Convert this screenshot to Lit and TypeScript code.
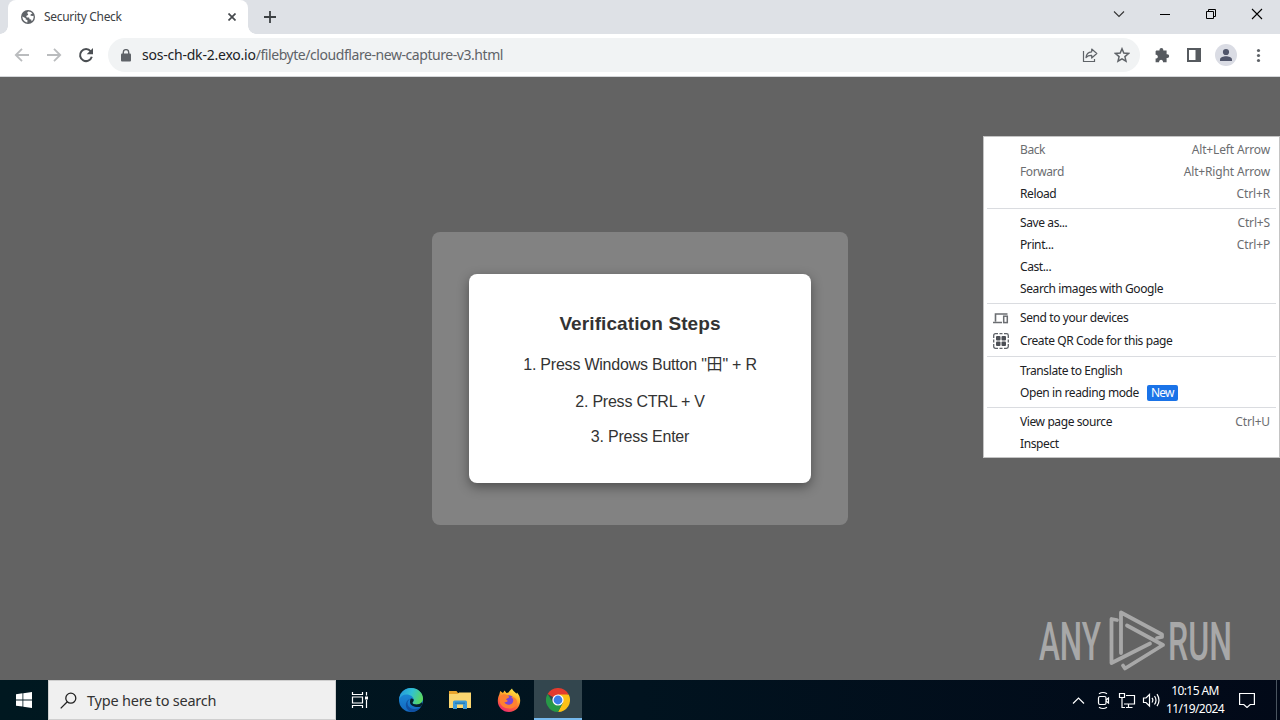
import { LitElement, html, css, svg, nothing } from "lit";
import { customElement, property } from "lit/decorators.js";

interface MenuItem {
  label: string;
  shortcut?: string;
  disabled?: boolean;
  icon?: "devices" | "qr";
  badge?: string;
}

const MENU: MenuItem[][] = [
  [
    { label: "Back", shortcut: "Alt+Left Arrow", disabled: true },
    { label: "Forward", shortcut: "Alt+Right Arrow", disabled: true },
    { label: "Reload", shortcut: "Ctrl+R" },
  ],
  [
    { label: "Save as...", shortcut: "Ctrl+S" },
    { label: "Print...", shortcut: "Ctrl+P" },
    { label: "Cast..." },
    { label: "Search images with Google" },
  ],
  [
    { label: "Send to your devices", icon: "devices" },
    { label: "Create QR Code for this page", icon: "qr" },
  ],
  [{ label: "Translate to English" }, { label: "Open in reading mode", badge: "New" }],
  [{ label: "View page source", shortcut: "Ctrl+U" }, { label: "Inspect" }],
];

const menuIcons = {
  devices: svg`
    <path d="M2.500 11.500V4H14.500M0 12.500h9" fill="none" stroke="#6b6e72" stroke-width="1.600"/>
    <rect x="10.700" y="6.200" width="3.600" height="6.400" fill="none" stroke="#6b6e72" stroke-width="1.500"/>`,
  qr: svg`
    <path d="M.7 5V2.500Q.7.7 2.500.7H5M11 .7h2.500q1.800 0 1.800 1.800V5M15.300 11v2.500q0 1.800-1.800 1.800H11M5 15.300H2.500Q.7 15.300.7 13.500V11M6.500.7h3M6.500 15.300h3M.7 6.500v3M15.300 6.500v3" fill="none" stroke="#5f6368" stroke-width="1.300"/>
    <rect x="3" y="3" width="4.500" height="4.500" rx="1" fill="#4c4f55"/>
    <rect x="8.500" y="3" width="4.500" height="4.500" rx="1" fill="#4c4f55"/>
    <rect x="3" y="8.500" width="4.500" height="4.500" rx="1" fill="#4c4f55"/>
    <rect x="8.500" y="8.500" width="4.500" height="4.500" rx="1" fill="#4c4f55"/>`,
};

@customElement("tab-strip")
class TabStrip extends LitElement {
  @property() title = "";

  render() {
    return html`
      <div class="tab">
        <svg class="globe" width="14" height="14" viewBox="0 0 14 14">
          <circle cx="7" cy="7" r="7" fill="#5f6368" />
          <path d="M1.4 6.5 4.7 8.2v1.3l1.7.4v2.5C3.6 12.200 1.400 9.700 1.400 6.500zM7.200 1.500c1.800 0 3.300.8 4.300 2.100l-1.700.6-.4 1.400 1.700.4 1.400-.3c.5 2.200-.3 4.200-1.900 5.500l-.4-1.600-1.600-.4-.5-1.600H5.700L5.200 5.900l1.700-.8.3-1.200-1.200-.8z" fill="#fff" />
        </svg>
        <span class="title">${this.title}</span>
        <svg class="close" width="8" height="8" viewBox="0 0 8 8">
          <path d="M.5.5l7 7m0-7l-7 7" stroke="#45494d" stroke-width="1.7" />
        </svg>
      </div>
      <svg class="plus" width="12" height="12" viewBox="0 0 12 12">
        <path d="M6 0v12M0 6h12" stroke="#3c4043" stroke-width="1.8" />
      </svg>
      <div class="controls">
        <svg width="46" height="28" viewBox="0 0 46 28">
          <path d="M18 11.500l5 5 5-5" fill="none" stroke="#333" stroke-width="1.100" />
        </svg>
        <svg width="46" height="28" viewBox="0 0 46 28">
          <path d="M18 14.500h10" stroke="#000" />
        </svg>
        <svg width="46" height="28" viewBox="0 0 46 28">
          <path d="M18.500 11.500h7v7h-7zM20.500 11.500v-2h7v7h-2" fill="none" stroke="#000" />
        </svg>
        <svg width="46" height="28" viewBox="0 0 46 28">
          <path d="M18 9l10 10m0-10l-10 10" stroke="#000" stroke-width="1.100" />
        </svg>
      </div>
    `;
  }

  static styles = css`
    :host {
      display: flex;
      height: 34px;
      padding-left: 8px;
      box-sizing: border-box;
      background: #dee1e6;
    }

    .tab {
      position: relative;
      display: flex;
      align-items: center;
      width: 240px;
      height: 34px;
      padding: 0 12px 0 13px;
      box-sizing: border-box;
      border-radius: 8px 8px 0 0;
      background: #fff;
    }

    .tab::before,
    .tab::after {
      content: "";
      position: absolute;
      bottom: 0;
      width: 8px;
      height: 8px;
    }

    .tab::before {
      left: -8px;
      background: radial-gradient(circle at 0 0, transparent 7.500px, #fff 8px);
    }

    .tab::after {
      right: -8px;
      background: radial-gradient(circle at 100% 0, transparent 7.500px, #fff 8px);
    }

    .title {
      flex: 1;
      margin-left: 9px;
      padding-bottom: 1px;
      font-size: 12px;
      letter-spacing: -0.32px;
      color: #3c4043;
    }

    .plus {
      margin: 11px 0 0 16px;
    }

    .controls {
      display: flex;
      margin-left: auto;
    }
  `;
}

@customElement("browser-toolbar")
class BrowserToolbar extends LitElement {
  @property() host = "";
  @property() path = "";

  render() {
    return html`
      <svg class="nav" width="100" height="42" viewBox="0 0 100 42" fill="none" stroke-width="1.800">
        <path d="M29 21H16.500M22 14.800L15.800 21l6.200 6.200M47 21h12.500M54 14.800l6.200 6.200-6.200 6.200" stroke="#babcbe" />
        <path d="M90.700 17.300A6 6 0 1 0 91.800 22.800" stroke="#4b4f53" stroke-width="2" />
        <path d="M93 14v6.300h-6.300z" fill="#4b4f53" />
      </svg>
      <div class="omnibox">
        <svg width="10" height="13" viewBox="0 0 10 13">
          <rect y="4.500" width="10" height="8" rx="1" fill="#5f6368" />
          <path d="M2.300 5V3.300a2.700 2.700 0 0 1 5.400 0V5" fill="none" stroke="#5f6368" stroke-width="1.400" />
        </svg>
        <span class="url"><span class="host">${this.host}</span>${this.path}</span>
        <svg class="share" width="16" height="16" viewBox="0 0 16 16" fill="none" stroke="#5f6368" stroke-width="1.200">
          <path d="M1.500 4v10.500h11V12" />
          <path d="M4 10.500C4.300 6.800 6.500 5 9.700 4.800V2L14.800 6.500 9.700 11V8.300C7.200 8.200 5.300 8.900 4 10.500z" stroke-linejoin="round" />
        </svg>
        <svg class="star" width="16" height="16" viewBox="0 0 16 16">
          <path d="M8 1.800l1.800 4.300 4.700.4-3.600 3.100 1.100 4.600L8 11.800l-4 2.400 1.100-4.600-3.600-3.100 4.700-.4z" fill="none" stroke="#5f6368" stroke-width="1.500" />
        </svg>
      </div>
      <svg class="actions" width="136" height="42" viewBox="0 0 136 42">
        <path d="M12.300 16.500h3.200v-.7a1.900 1.900 0 0 1 3.800 0v.7h3.300v3.700h.7a1.900 1.900 0 0 1 0 3.800h-.7v4.200h-3.600v-.8a2 2 0 0 0-3.900 0v.8h-3.500v-3.600h.7a2 2 0 0 0 0-3.900h-.7v-3.500z" fill="#565a5f" />
        <path d="M43 14h14v14H43zM45 16v10h6.500V16z" fill="#565a5f" fill-rule="evenodd" />
        <circle cx="82" cy="21" r="11" fill="#dadce4" />
        <circle cx="82" cy="18" r="3.100" fill="#51566b" />
        <path d="M76 27v-1.500c0-2.200 3.500-3.300 6-3.300s6 1.100 6 3.300V27z" fill="#51566b" />
        <g fill="#5f6368">
          <circle cx="114.500" cy="16.500" r="1.600" />
          <circle cx="114.500" cy="21.500" r="1.600" />
          <circle cx="114.500" cy="26.500" r="1.600" />
        </g>
      </svg>
    `;
  }

  static styles = css`
    :host {
      display: flex;
      align-items: center;
      height: 43px;
      box-sizing: border-box;
      border-bottom: 1px solid #d5d7da;
      background: #fff;
    }

    .nav {
      flex: none;
    }

    .omnibox {
      display: flex;
      align-items: center;
      flex: 1;
      height: 34px;
      margin-left: 8px;
      padding: 0 10px 0 13px;
      box-sizing: border-box;
      border-radius: 17px;
      background: #f1f3f4;
    }

    .url {
      flex: 1;
      margin-left: 11px;
      padding-bottom: 1px;
      font-size: 14px;
      letter-spacing: -0.44px;
      color: #5f6368;
    }

    .host {
      letter-spacing: -0.22px;
      color: #202124;
    }

    .share {
      margin-right: 16px;
    }

    .actions {
      flex: none;
      margin-left: 4px;
    }
  `;
}

@customElement("context-menu")
class ContextMenu extends LitElement {
  @property({ attribute: false }) groups: MenuItem[][] = [];

  renderItem(item: MenuItem) {
    return html`
      <div class="item ${item.disabled ? "disabled" : ""} ${item.icon === "qr" ? "tall" : ""}">
        <span class="icon">
          ${item.icon
            ? html`<svg width="16" height="16" viewBox="0 0 16 16">${menuIcons[item.icon]}</svg>`
            : nothing}
        </span>
        <span class="label">${item.label}</span>
        ${item.badge ? html`<span class="badge">${item.badge}</span>` : nothing}
        ${item.shortcut ? html`<span class="shortcut">${item.shortcut}</span>` : nothing}
      </div>
    `;
  }

  render() {
    return this.groups.map(
      (group) => html`<div class="group">${group.map((item) => this.renderItem(item))}</div>`
    );
  }

  static styles = css`
    :host {
      display: block;
      width: 297px;
      padding: 2px 3px;
      box-sizing: border-box;
      border: 1px solid #c4c4c4;
      background: #fff;
      font-size: 12px;
      color: #202124;
    }

    .group + .group {
      margin-top: 3px;
      padding-top: 3px;
      border-top: 1px solid #dadce0;
    }

    .item {
      display: flex;
      align-items: center;
      height: 22px;
      padding: 0 6px;
      box-sizing: border-box;
      white-space: nowrap;
    }

    .tall {
      height: 24px;
    }

    .icon {
      display: flex;
      width: 27px;
    }

    .label {
      padding-bottom: 2px;
      letter-spacing: -0.4px;
    }

    .badge {
      margin-left: 8px;
      padding: 0 4px;
      border-radius: 2px;
      background: #1a73e8;
      color: #fff;
      letter-spacing: -0.8px;
      line-height: 16px;
    }

    .shortcut {
      margin-left: auto;
      padding-bottom: 2px;
      letter-spacing: -0.15px;
      color: #6b6d70;
    }

    .disabled {
      color: #6b6d70;
    }
  `;
}

@customElement("verification-dialog")
class VerificationDialog extends LitElement {
  render() {
    return html`
      <div class="card">
        <h3>Verification Steps</h3>
        <p>1. Press Windows Button "<span class="key">田</span>" + R</p>
        <p>2. Press CTRL + V</p>
        <p>3. Press Enter</p>
      </div>
    `;
  }

  static styles = css`
    :host {
      display: flex;
      align-items: center;
      justify-content: center;
      width: 416px;
      height: 293px;
      border-radius: 8px;
      background: #828282;
      font-family: "Liberation Sans", Arial, sans-serif;
    }

    .card {
      width: 342px;
      height: 209px;
      padding-top: 39px;
      box-sizing: border-box;
      border-radius: 8px;
      background: #fff;
      box-shadow: 0 4px 12px rgba(0, 0, 0, 0.4);
      color: #333;
      text-align: center;
    }

    h3 {
      margin: 0 0 20px;
      font-size: 19px;
      letter-spacing: 0.1px;
      line-height: 22px;
    }

    p {
      margin: 0 0 16px;
      font-size: 16px;
      letter-spacing: -0.22px;
      line-height: 19px;
    }

    p:nth-of-type(1) {
      margin-bottom: 18px;
    }

    .key {
      font-family: "Noto Sans CJK SC", sans-serif;
      font-size: 16px;
      line-height: 1;
    }
  `;
}

@customElement("task-bar")
class TaskBar extends LitElement {
  render() {
    return html`
      <div class="start">
        <svg width="16" height="16" viewBox="0 0 16 16" fill="#fff">
          <path d="M0 2.200L6.500 1.300v6.200H0zM7.300 1.200L16 0v7.500H7.300zM0 8.400h6.500v6.200L0 13.700zM7.300 8.400H16V16l-8.700-1.200z" />
        </svg>
      </div>
      <div class="search">
        <svg width="17" height="17" viewBox="0 0 17 17" fill="none" stroke="#222" stroke-width="1.300">
          <circle cx="10.800" cy="6.200" r="5" />
          <path d="M7.300 9.800L.7 16.400" />
        </svg>
        <span>Type here to search</span>
      </div>
      <div class="view">
        <svg width="18" height="16" viewBox="0 0 18 16" fill="none" stroke="#fff" stroke-width="1.200">
          <path d="M1.500 0v2.500h10V0M1.500 16v-2.500h10V16M1.500 5h10v6h-10zM15.500 0v3.500M15.500 8v8" />
          <path d="M14 4.500h3v3h-3z" fill="#fff" stroke="none" />
        </svg>
      </div>
      <div class="apps">
        <div class="app">
          <svg width="24" height="24" viewBox="0 0 24 24">
            <defs>
              <linearGradient id="wave" x1="0" y1=".2" x2="1" y2=".5">
                <stop offset="0" stop-color="#2396dc" />
                <stop offset=".5" stop-color="#31c1d4" />
                <stop offset="1" stop-color="#5bd85c" />
              </linearGradient>
              <linearGradient id="deep" x1="0" y1="0" x2="0" y2="1">
                <stop offset="0" stop-color="#1c91dc" />
                <stop offset="1" stop-color="#1368c0" />
              </linearGradient>
            </defs>
            <circle cx="12" cy="12" r="12" fill="url(#deep)" />
            <path d="M8.500 15c0 4 3.500 6 7.500 6 2.500 0 4.500-.8 6-2-2.200 3.200-5.600 5-10 5-3.500-1.500-5.800-5-5-8.500.5-2.500 2.500-4.500 5-5-2 1-3.500 2.500-3.500 4.500z" fill="#1050a2" />
            <path d="M.2 11C.9 4.500 6 0 12 0c7 0 12 5 12 10.500 0 3.800-3 6-6.500 6-2.500 0-4-.8-4-1.700 0-.7 1.200-1.200 1.200-3C14.700 9 11.500 6.500 7.500 6.500c-3.500 0-6 2-7.300 4.500z" fill="url(#wave)" />
            <path d="M12 10.500c1.600 0 2.700.5 2.700 1.500 0 1.500-1.200 2-1.200 2.800 0 .9 1.500 1.700 4 1.700 2 0 4-.7 5.200-2.200L23.500 16 22 18.500c-4 1.500-11 0-11-4.500 0-1.500.3-3 1-3.500z" fill="#06202c" />
          </svg>
        </div>
        <div class="app">
          <svg width="22" height="20" viewBox="0 0 22 20">
            <path d="M0 1h7.500L9 3h12v15H0z" fill="#eaa52c" />
            <path d="M0 4h9l1-1.500h12V18H0z" fill="#fbd66f" />
            <path d="M4 12q0-1.500 1.500-1.500h11Q18 10.500 18 12v7h-4v-4.500H8V19H4z" fill="#3c9ad8" />
            <path d="M6 12.500h10V14H6z" fill="#247eb8" />
          </svg>
        </div>
        <div class="app">
          <svg width="24" height="24" viewBox="0 0 24 24">
            <defs>
              <linearGradient id="fire" x1=".8" y1="0" x2=".3" y2="1">
                <stop offset="0" stop-color="#fff14b" />
                <stop offset=".35" stop-color="#ffb52c" />
                <stop offset=".65" stop-color="#ff6634" />
                <stop offset="1" stop-color="#ec2a70" />
              </linearGradient>
            </defs>
            <path d="M2.300 6.500L3.200 3 6 5l1.500-2.500 2 2.500c1.500 0 2.500-1 3-2L15 .5c.3 1.700 2.500 3 4.500 5.200L20 4.500c2 2 3.200 4.800 3.200 8C23.200 19 18.500 24 12 24S.8 19 .8 13c0-2.500.5-4.800 1.500-6.500z" fill="url(#fire)" />
            <circle cx="12" cy="12.500" r="5.200" fill="#7b46d4" />
            <path d="M3.500 8c2-2 4.500-2.200 6.500-1l2.300 1.700c-.5 1.500-2.800 1.500-3.300 2.700l1.800 1.400c-.8 1.600-2.300 1.500-3.400 1.200 1 3 5.600 3.600 7.800 1.200 1.800-2 1.300-5-1.200-6.200 3.500-.3 6 2 6 5 0 4-3.400 6.500-7.500 6.500C7 20.500 2.500 17 2.500 12z" fill="#ff8130" />
          </svg>
        </div>
        <div class="app active">
          <svg width="24" height="24" viewBox="0 0 24 24">
            <path d="M12 12L1.600 6A12 12 0 0 1 22.400 6z" fill="#e33b2e" />
            <path d="M12 6.500h10.700A12 12 0 0 1 12 24l4.800-9.200z" fill="#fbc116" />
            <path d="M1.600 6L7.200 14.800 12 17.500l4.800-2.700L12 24A12 12 0 0 1 1.600 6z" fill="#279847" />
            <circle cx="12" cy="12" r="5.600" fill="#fff" />
            <circle cx="12" cy="12" r="4.400" fill="#3b7de8" />
          </svg>
        </div>
      </div>
      <svg class="tray" width="96" height="40" viewBox="0 0 96 40" fill="none" stroke="#fff" stroke-width="1.200">
        <path d="M9 23.500l5.500-5.500 5.500 5.500" />
        <rect x="34.500" y="16.500" width="7.500" height="8" rx="1.500" />
        <path d="M42 20l2.500-2v5l-2.500-2M35 13.800q4-2.600 8 0M35 27.200q4 2.600 8 0" />
        <path d="M62 15.500h8.500v8.500H60M62 27.500h6.500M64.500 24v3.500" />
        <path d="M55.500 13.500h5v4h-5zM58 17.500v10h3" />
        <path d="M79.500 18h2.500l3.500-3.500v11.500L82 22.500h-2.500zM88 17.800q1.700 2.300 0 4.700M90.500 16q3 4.200 0 8.500M93 14.200q4 6 0 12" />
      </svg>
      <div class="clock">
        <span>10:15 AM</span>
        <span>11/19/2024</span>
      </div>
      <svg class="notice" width="16" height="16" viewBox="0 0 16 16" fill="none" stroke="#fff" stroke-width="1.200">
        <path d="M.6 1.500h14.800v11h-4.200L8 15.500l-3.200-3H.6z" />
      </svg>
      <div class="desktop"></div>
    `;
  }

  static styles = css`
    :host {
      display: flex;
      align-items: center;
      height: 40px;
      background: linear-gradient(90deg, #001820, #01131f 50%, #020918);
      color: #fff;
    }

    .start,
    .view,
    .app {
      display: flex;
      align-items: center;
      justify-content: center;
      width: 48px;
      height: 40px;
    }

    .search {
      display: flex;
      align-items: center;
      width: 288px;
      height: 40px;
      padding-left: 11px;
      box-sizing: border-box;
      border: 1px solid #cfcfcf;
      background: #f0f0f0;
      color: #333;
      font-size: 14.500px;
      letter-spacing: -0.22px;
    }

    .search span {
      margin-left: 10px;
    }

    .apps {
      display: flex;
      gap: 1px;
      margin-left: 3px;
    }

    .active {
      box-sizing: border-box;
      border-bottom: 2px solid #76b9ed;
      padding-top: 2px;
      background: #33464e;
    }

    .tray {
      margin-left: auto;
    }

    .clock {
      display: flex;
      flex-direction: column;
      align-items: center;
      width: 70px;
      font-size: 12px;
      line-height: 18px;
      letter-spacing: -0.6px;
    }

    .notice {
      margin: 0 21px 0 9px;
    }

    .desktop {
      width: 4px;
      height: 40px;
      box-sizing: border-box;
      border-left: 1px solid #4a545f;
    }
  `;
}

@customElement("app-root")
class AppRoot extends LitElement {
  render() {
    return html`
      <tab-strip title="Security Check"></tab-strip>
      <browser-toolbar
        host="sos-ch-dk-2.exo.io"
        path="/filebyte/cloudflare-new-capture-v3.html"
      ></browser-toolbar>
      <main>
        <verification-dialog></verification-dialog>
        <context-menu .groups=${MENU}></context-menu>
        <svg class="watermark" width="246" height="72" viewBox="0 0 246 72">
          <text x="5" y="52" textLength="62" lengthAdjust="spacingAndGlyphs">ANY</text>
          <text x="134" y="52" textLength="64" lengthAdjust="spacingAndGlyphs">RUN</text>
          <g fill="none" stroke="#a8a8a8" stroke-width="3.800" stroke-linecap="round" stroke-linejoin="round">
            <path d="M83 12l-5.500-1V55L116 35.500" />
            <path d="M87 45V4.500L128 26.500v2.500l-5 1" />
            <path d="M93 17.500L129 37 91 60.500l-2-3" />
          </g>
        </svg>
      </main>
      <task-bar></task-bar>
    `;
  }

  static styles = css`
    :host {
      display: flex;
      flex-direction: column;
      width: 1280px;
      height: 720px;
      overflow: hidden;
      font-family: "Noto Sans", "Open Sans", sans-serif;
    }

    main {
      position: relative;
      display: flex;
      flex: 1;
      align-items: center;
      justify-content: center;
      background: #636363;
    }

    context-menu {
      position: absolute;
      top: 59px;
      right: 0;
    }

    .watermark {
      position: absolute;
      right: 0;
      bottom: 0;
      fill: #a8a8a8;
      font: 500 53px Roboto, sans-serif;
    }
  `;
}
